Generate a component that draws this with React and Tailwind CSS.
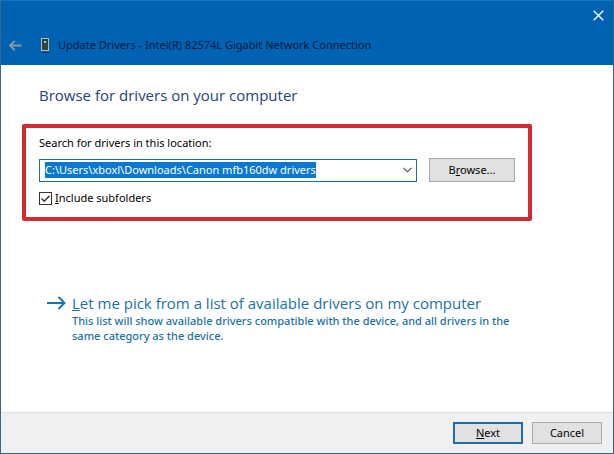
import React, { useState, useRef, useEffect } from 'react'

const LOCATION = 'C:\\Users\\xboxl\\Downloads\\Canon mfb160dw drivers'

function BackIcon() {
  return (
    <svg width="13" height="11" viewBox="0 0 13 11" fill="none" stroke="#8f9a9f" strokeWidth="1.8">
      <path d="M12.5 5.5H1M5.8 .8L1 5.5l4.8 4.7" />
    </svg>
  )
}

function DeviceIcon() {
  return (
    <svg width="10" height="16" viewBox="0 0 10 16">
      <rect x="1" y="1" width="8" height="13" fill="#b3bcb8" />
      <rect x="2" y="2" width="6" height="11" fill="#31423f" />
      <rect x="4" y="4" width="2" height="2" fill="#7fe08a" />
      <rect x="2" y="15" width="7" height="1" fill="#23303a" />
    </svg>
  )
}

function CloseIcon() {
  return (
    <svg width="11" height="11" viewBox="0 0 11 11" fill="none" stroke="#fff" strokeWidth="1.3">
      <path d="M.7 .7l9.6 9.6M10.3 .7L.7 10.3" />
    </svg>
  )
}

function ChevronIcon() {
  return (
    <svg width="9" height="6" viewBox="0 0 9 6" fill="none" stroke="#4a4a4a" strokeWidth="1.1">
      <path d="M.5 .8l4 4 4-4" />
    </svg>
  )
}

function ArrowIcon() {
  return (
    <svg width="19" height="14" viewBox="0 0 19 14" fill="none" stroke="#1a72a8" strokeWidth="1.9">
      <path d="M0 7h17M11.5 1l6 6-6 6" />
    </svg>
  )
}

function TitleBar() {
  return (
    <header className="bg-[#0063b1] h-16 shrink-0">
      <div className="flex justify-end pt-[9px] pr-[9px]">
        <button aria-label="Close" className="block"><CloseIcon /></button>
      </div>
      <div className="flex items-center h-5 mt-[14px] pl-2">
        <button aria-label="Back" className="mr-[18px]"><BackIcon /></button>
        <DeviceIcon />
        <h1 className="ml-2 text-[#04173f]">Update Drivers - Intel(R) 82574L Gigabit Network Connection</h1>
      </div>
    </header>
  )
}

function LocationSearch() {
  const [path, setPath] = useState(LOCATION)
  const [subfolders, setSubfolders] = useState(true)
  const pathInput = useRef(null)

  useEffect(() => {
    pathInput.current?.focus()
    pathInput.current?.select()
  }, [])

  return (
    <section className="ml-[21px] mr-[81px] mt-[19px] px-[13px] pt-[7px] pb-[11px] border-4 border-[#d22a31] rounded-xs">
      <label htmlFor="path" className="block leading-4">Search for drivers in this location:</label>
      <div className="flex items-center mt-[7px] gap-3">
        <div className="flex-1 min-w-0 h-[23px] flex items-center border border-[#1f6c9e] bg-white">
          <input
            id="path"
            type="text"
            value={path}
            onChange={(e) => setPath(e.target.value)}
            ref={pathInput}
            className="flex-1 min-w-0 pl-[5px] h-4 leading-4 outline-none selection:bg-[#0a78d0] selection:text-white"
          />
          <button aria-label="Show locations" className="px-1"><ChevronIcon /></button>
        </div>
        <button className="w-[86px] h-6 border border-[#a5a9ab] bg-[#e1e1e1]">B<u>r</u>owse...</button>
      </div>
      <label className="flex items-center w-fit gap-[3px] mt-2 leading-4">
        <span className="grid size-[13px]">
          <input
            type="checkbox"
            checked={subfolders}
            onChange={(e) => setSubfolders(e.target.checked)}
            className="peer appearance-none size-[13px] border border-[#333] bg-white col-start-1 row-start-1"
          />
          <svg viewBox="0 0 13 13" fill="none" stroke="#333" strokeWidth="1.4" className="hidden peer-checked:block size-[13px] col-start-1 row-start-1 pointer-events-none">
            <path d="M2.5 6.5l2.8 2.8 5.2-5.6" />
          </svg>
        </span>
        <span><u>I</u>nclude subfolders</span>
      </label>
    </section>
  )
}

function PickFromList() {
  return (
    <a href="#" className="flex items-start ml-[46px] mr-[90px] mt-[72px] text-[#1a72a8]">
      <span className="mt-[3px] mr-[6px] shrink-0"><ArrowIcon /></span>
      <span>
        <span className="block text-[15px] leading-5 font-['Open_Sans','Noto_Sans',sans-serif]"><u>L</u>et me pick from a list of available drivers on my computer</span>
        <span className="block leading-[15px] font-medium">This list will show available drivers compatible with the device, and all drivers in the same category as the device.</span>
      </span>
    </a>
  )
}

export default function App() {
  return (
    <div className="min-h-screen flex flex-col border border-[#2a6d8c] border-t-[#1a73b8] bg-white text-black text-[11px] font-['Noto_Sans','Open_Sans',sans-serif]">
      <TitleBar />
      <main className="flex-1">
        <h2 className="ml-[38px] mt-5 text-[15px] leading-5 text-[#24447a] font-['Open_Sans','Noto_Sans',sans-serif]">Browse for drivers on your computer</h2>
        <LocationSearch />
        <PickFromList />
      </main>
      <footer className="flex justify-end gap-[9px] pt-[9px] pb-[9px] pr-[11px] border-t border-[#dfdfdf] bg-[#f0f0f0]">
        <button className="w-[70px] h-[22px] border-2 border-[#1f6ca8] bg-[#e1e1e1]"><u>N</u>ext</button>
        <button className="w-[70px] h-[22px] border border-[#adadad] bg-[#e1e1e1]">Cancel</button>
      </footer>
    </div>
  )
}
